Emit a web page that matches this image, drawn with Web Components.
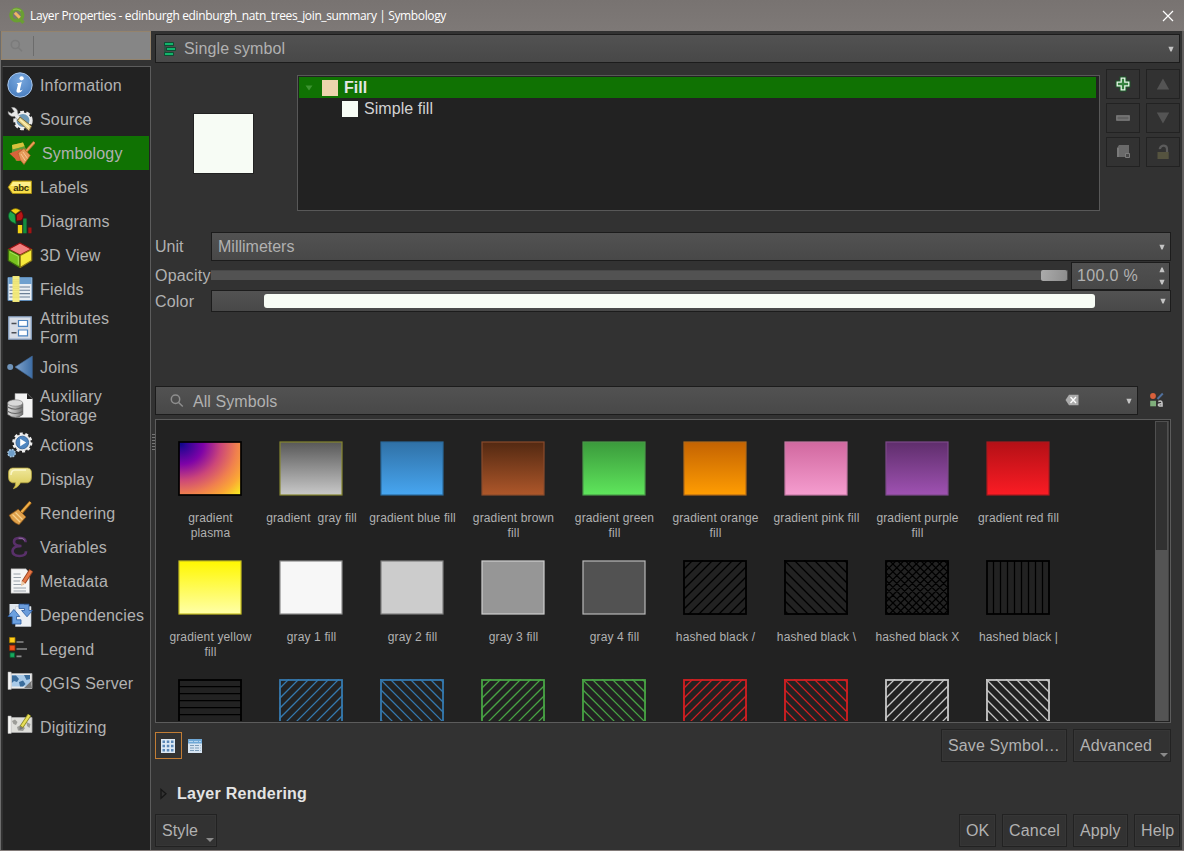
<!DOCTYPE html>
<html lang="en">
<head>
<meta charset="utf-8">
<title>Layer Properties</title>
<style>
html,body{margin:0;padding:0;background:#323232}
body{width:1184px;height:851px;overflow:hidden;font:16px "Liberation Sans",Arial,sans-serif;color:#b1b1b1}
</style>
</head>
<body>
<layer-properties></layer-properties>
<script>
const ICONS = {
info:`<defs><radialGradient id="g" cx=".5" cy=".3" r=".7"><stop offset="0" stop-color="#79a8de"/><stop offset="1" stop-color="#4a7fc0"/></radialGradient></defs><circle cx="13" cy="13" r="12.2" fill="url(#g)" stroke="#a9c6ea" stroke-width="1"/><circle cx="14.6" cy="6.3" r="2.1" fill="#fff"/><path d="M9.6 11.3Q12.5 11 14.8 9.8L13 17.6Q12.7 19.3 15.6 17.6Q14 20.8 11.2 20.8Q9 20.6 9.6 18L11 12.4Z" fill="#fff"/>`,
source:`<circle cx="16" cy="14.5" r="8" fill="#5c86a4" stroke="#e8e8e8" stroke-width="3.4" stroke-dasharray="3.6 2.2"/><circle cx="16" cy="14.5" r="7.3" fill="#6f9ab8" stroke="#eee" stroke-width="1.6"/><path d="M4.5 1.5A5 5 0 0 1 10.5 8L14 11.5L11 14L7.5 10.3A5 5 0 0 1 1 5.5L4.5 7.5L7.3 5.5Z" fill="#e9e9e9" stroke="#888" stroke-width=".5"/><path d="M13 11L24.6 20.2L22 25L10.5 14.5Z" fill="#e8d48a" stroke="#6f6130" stroke-width=".9"/><path d="M13 13.5L22 21.5" stroke="#fff3b8" stroke-width="1.2"/>`,
symbology:`<path d="M3 5L14 2.5L19 14L7 21Z" fill="#8fae2c"/><path d="M3 5L14 2.5L15.5 6L3.5 10Z" fill="#d8c23c"/><path d="M3 9.5L15.5 6.5L17 10L3 14.5Z" fill="#5d9a38"/><path d="M0.5 13.5L12 9L18 20L8.5 21Z" fill="#d9633a"/><path d="M9 13L15 8.5L21.3 15.4L15 24.5Q10.5 20.5 9 13Z" fill="#e59a59" stroke="#b35a24" stroke-width=".7"/><path d="M12 14L16.5 21M14 12L18.5 18.5" stroke="#f6c795" stroke-width="1"/><path d="M17 11.5L25.5 2" stroke="#b9702a" stroke-width="3"/><path d="M17.3 11L25.2 2.2" stroke="#eda35c" stroke-width="1.5"/>`,
labels:`<path d="M5.5 7H24.5V19.5H5.5L1.2 13.2Z" fill="#f7dd48" stroke="#a78d14"/><path d="M6 8H23.5V12H3.6Z" fill="#fff08a"/><text x="6.2" y="16.5" font-family="Liberation Sans,Arial,sans-serif" font-weight="700" font-size="9.5" fill="#33300e" textLength="16">abc</text>`,
diagrams:`<path d="M8.5 6L3.8 2.6Q8.5-1.4 13.5 2.6Z" fill="#f5d313" stroke="#75640b" stroke-width=".7"/><path d="M8 6.5L3.3 3.3Q-.8 8.5 4 13.5L9 16Z" fill="#1fa74c" stroke="#0b5924" stroke-width=".7"/><path d="M9.4 7L14.3 3.3Q18 8.5 14.5 12.2L9.5 13Z" fill="#b61717" stroke="#600" stroke-width=".7"/><path d="M10.8 17H15.2V25.3H10.8Z" fill="#f5d313"/><path d="M16.2 10.5H19.6V25.3H16.2Z" fill="#128c3e"/><path d="M21.3 19.5H24.5V25.3H21.3Z" fill="#a31313"/>`,
view3d:`<path d="M13 1L24.5 7.2L13 13.2L1.5 7.2Z" fill="#f28080" stroke="#961111" stroke-width="1.3" stroke-linejoin="round"/><path d="M1.3 7.5L12.8 13.5V25.5L1.3 18.6Z" fill="#79c21f" stroke="#3e6d0c" stroke-width="1.2" stroke-linejoin="round"/><path d="M24.7 7.5L13.2 13.5V25.5L24.7 18.6Z" fill="#f7e93c" stroke="#8f7a14" stroke-width="1.2" stroke-linejoin="round"/><path d="M3 10L11.3 14.3V22.6" fill="none" stroke="#a9e35b"/>`,
fields:`<path d="M1 1.5H25V24.5H1Z" fill="#e9eef4" stroke="#5e8bb8" stroke-width="1"/><path d="M1.5 2H24.5V8H1.5Z" fill="#6fa0cf"/><path d="M2.5 11H23M2.5 14.3H23M2.5 17.6H23M2.5 21H23" stroke="#6b7f96" stroke-width="1.1"/><path d="M5.5 0H12.5V26H5.5Z" fill="#f9ef7c" fill-opacity=".95"/><path d="M7 3V23M9 3V23M11 3V23" stroke="#d9cf66" stroke-width=".7" stroke-dasharray="1.2 1"/>`,
form:`<path d="M1.8 1.8H24.2V24.2H1.8Z" fill="#d7dde6" stroke="#8fa8c8" stroke-width="1.3"/><path d="M4.5 8.5H9.5M4.5 17.8H9.5" stroke="#4b4f55" stroke-width="1.5"/><path d="M11.5 5.5H20.5V11.3H11.5ZM11.5 15H20.5V20.8H11.5Z" fill="#fff" stroke="#4e86c2" stroke-width="1.2"/>`,
joins:`<defs><linearGradient id="g"><stop offset="0" stop-color="#7fa3cc"/><stop offset="1" stop-color="#3e6ea5"/></linearGradient></defs><circle cx="3.2" cy="13" r="3" fill="#6f93b8"/><path d="M8 13L25.3 2V24.5Z" fill="url(#g)" stroke="#41699a" stroke-width=".6"/>`,
storage:`<path d="M8 .5H20L25.5 6V24.5H8Z" fill="#f3f3f3" stroke="#999" stroke-width=".6"/><path d="M20 .5V6H25.5Z" fill="#222" /><defs><linearGradient id="g"><stop offset="0" stop-color="#e0e0e0"/><stop offset=".6" stop-color="#aaa"/><stop offset="1" stop-color="#6d6d6d"/></linearGradient></defs><path d="M.6 10.5V21.5Q8.2 27.5 15.8 21.5V10.5Z" fill="url(#g)" stroke="#555" stroke-width=".7"/><ellipse cx="8.2" cy="10" rx="7.6" ry="3.2" fill="#d9d9d9" stroke="#777" stroke-width=".6"/><path d="M.6 14Q8.2 18.5 15.8 14M.6 18.2Q8.2 22.8 15.8 18.2" fill="none" stroke="#666" stroke-width="1.2"/>`,
actions:`<circle cx="15.3" cy="10.5" r="8.6" fill="#e6e6e6" stroke="#f0f0f0" stroke-width="3" stroke-dasharray="2.9 2.5"/><circle cx="15.3" cy="10.5" r="6.3" fill="#4f86c0" stroke="#37659c" stroke-width=".9"/><path d="M13.2 6.8L19.2 10.5L13.2 14.2Z" fill="#fff"/><circle cx="4.6" cy="21.2" r="3.6" fill="#6f9fca" stroke="#a9c8e0" stroke-width="1.5" stroke-dasharray="1.7 1.1"/>`,
display:`<defs><linearGradient id="g" x2="0" y2="1"><stop offset="0" stop-color="#f0e89d"/><stop offset="1" stop-color="#d8c850"/></linearGradient></defs><path d="M5.5 2H20.5Q24.5 2.4 24.5 7V11.5Q24.5 16 20.5 16.8H13.5Q11.5 21.5 6.3 22.8Q8.9 20 8.6 16.8H5.5Q1.5 16 1.5 11.5V7Q1.5 2.4 5.5 2Z" fill="url(#g)" stroke="#b9a83e" stroke-width=".7"/><path d="M4 9Q4 4.3 8 4H19" fill="none" stroke="#fbf7cb" stroke-width="1.4"/>`,
rendering:`<path d="M13.5 13.5L23.5 2.2" stroke="#9b5e14" stroke-width="3.4"/><path d="M13.6 13L23.4 2.2" stroke="#efb04a" stroke-width="2"/><path d="M2.2 15.2L11.2 9.2L19 17L12 24.8Q5.5 22.5 2.2 15.2Z" fill="#dfa04a" stroke="#8f5718" stroke-width=".7"/><path d="M5.5 14.5L13 22M8.5 12.5L15.5 19.5" stroke="#f7d08c" stroke-width="1.3"/>`,
variables:`<path d="M18.6 8.3Q18.7 4 12.8 3.8Q6.8 4 7 8Q7.2 11.5 13.6 12Q5.7 12.4 5.5 17Q5.6 21.8 12.6 22Q19.2 21.8 19 17.3" fill="none" stroke="#59306a" stroke-width="2.7"/><path d="M9 12H14.5" stroke="#59306a" stroke-width="2.4"/><path d="M17.8 6.4Q16 3.5 11.6 4.2" stroke="#a184ae" stroke-width=".8" fill="none"/>`,
metadata:`<path d="M4 .8H19L22.5 5V25.2H4Z" fill="#f5f5f5" stroke="#999" stroke-width=".5"/><path d="M6.5 6H13.5M6.5 9.5H14M6.5 13H13M6.5 16.5H17M6.5 20H19M6.5 23H19" stroke="#9aa2aa" stroke-width="1"/><path d="M24.3 2.3L16.5 14.5" stroke="#9b4420" stroke-width="4.6"/><path d="M24 2.7L16.8 14" stroke="#e57847" stroke-width="2.8"/><path d="M14.6 12.8L18.6 15.4L14 18.2Z" fill="#edc8a4"/>`,
dependencies:`<path d="M2.5 2H17V15H2.5Z" fill="#dfe6ee"/><path d="M8.5 4.5H24V24.5H8.5Z" fill="#eceff4" stroke="#c3c9d2" stroke-width=".6"/><path d="M12 2.2H22V8.5H25.4L20 14.8L14.6 8.5H17.5V6.5H12Z" fill="#6b9cdb" stroke="#2c5c9f" stroke-width=".8"/><path d="M14 22H5.2V14.5H1L6.9 7.4L12.8 14.5H9.5V17.8H14Z" fill="#6ba0df" stroke="#2c5c9f" stroke-width=".8"/>`,
legend:`<path d="M2.6 1.5H8V6.7H2.6Z" fill="#ffcf1c" stroke="#a87f00" stroke-width=".8"/><path d="M2.6 9.2H8V14.4H2.6Z" fill="#f2531b" stroke="#962a00" stroke-width=".8"/><path d="M3 16.8H7.6V21.4H3Z" fill="#18a85e" stroke="#075f31" stroke-width=".8"/><path d="M9.5 6H16.5M9.5 13H20M9.5 20.3H14.5" stroke="#8c8c8c" stroke-width="1.7"/>`,
server:`<path d="M1.5 3.5H25V18.5H1.5Z" fill="#e9e9e9" stroke="#aaa" stroke-width=".8"/><path d="M4.8 5H23V16.5H4.8Z" fill="#a9cae8"/><path d="M4.8 5.5H9L12 9L10 12L7 11L4.8 13ZM12 12L16 10.5L18.5 14L16 16.5H13ZM17 5H23V9L19.5 10Z" fill="#3a6c9b"/><path d="M1 2H4.2V19.5H1Z" fill="#f3f3f3" stroke="#aaa" stroke-width=".5"/><path d="M17 18L24.8 10.5Q24 13 25 18Z" fill="#777"/>`,
digitizing:`<path d="M1.5 3.5H25V18.5H1.5Z" fill="#dededa" stroke="#aaa" stroke-width=".8"/><path d="M5 7L8 5.5L10.5 8L9 11L6.5 10ZM10 13L14 11L18 14L16 17L11 16.5ZM19.5 8L23.5 10L22.5 14L20 12Z" fill="#9c9c98"/><path d="M1 2H4.2V19.5H1Z" fill="#f6f6f4" stroke="#aaa" stroke-width=".5"/><path d="M22.5 .8L14.3 13.2" stroke="#8e8a27" stroke-width="4"/><path d="M22.3 1.1L14.8 12.4" stroke="#e8df58" stroke-width="2.4"/><path d="M12.8 12L16.4 14.2L12.5 16Z" fill="#777"/>`
};
const define = (tag, css, html) => customElements.define(tag, class extends HTMLElement{
  connectedCallback(){
    if (this.shadowRoot) return;
    const root = this.attachShadow({mode:'open'});
    root.innerHTML = `<style>*{box-sizing:border-box}:host{display:block;box-sizing:border-box}${css}</style>` + (typeof html === 'function' ? html(this) : html);
  }
});

/* Title bar */
define('title-bar', `:host{display:flex;align-items:center;height:31px;background:linear-gradient(#787371,#7e7977);color:#fff;padding:0 10px 0 9px}
 .t{font:12px/31px "Open Sans","Noto Sans",sans-serif;letter-spacing:-.37px;margin-left:5px;flex:1;white-space:pre}`,
 `<svg width="16" height="17" viewBox="0 0 16 17"><circle cx="7.8" cy="8" r="5.8" fill="none" stroke="#6a9f33" stroke-width="3.6"/><path d="M4 3Q8 .8 12 4" fill="none" stroke="#8fbd4e" stroke-width="1.2"/><path d="M8.5 9.5L14.5 15.8" stroke="#6a9f33" stroke-width="3.4"/><path d="M5.8 5.8L10.8 10.8" stroke="#efb765" stroke-width="3"/></svg>
 <span class="t"><slot></slot></span>
 <svg width="12" height="12" viewBox="0 0 12 12"><path d="M1 1L11 11M11 1L1 11" stroke="#fff" stroke-width="1.2"/></svg>`);

define('side-search', `:host{display:flex;align-items:center;width:150px;height:29px;background:#868686;border:1px solid #94836c;padding-left:7px;margin-left:1px}
 i{width:1px;height:20px;background:#6c6c6c;margin-left:8px}`,
 `<svg width="16" height="16" viewBox="0 0 16 16" fill="none" stroke="#7b7b7b" stroke-width="1.6"><circle cx="6.3" cy="6.5" r="4"/><path d="M9.3 9.5L13 13.2"/></svg><i></i>`);

define('nav-item', `:host{display:flex;align-items:center;height:34px;padding-left:4px;line-height:19px;letter-spacing:.16px}
 :host([tall]){height:44px}:host([last]){height:54px}
 :host([selected]){background:#107203;padding-left:6px;margin-right:1px}
 svg{flex:none;margin-right:7px}`,
 el => `<svg width="26" height="26" viewBox="0 0 26 26">${ICONS[el.getAttribute('icon')]}</svg><span><slot></slot></span>`);

define('nav-list', `:host{width:149px;height:785px;margin:6px 0 0 2px;background:#222;border:1px solid #5c5c5c;border-left-color:#303030;padding-top:1px;white-space:nowrap}`, `<slot></slot>`);

/* Combo box */
define('combo-box', `:host{display:flex;align-items:center;height:28px;background:linear-gradient(#525252,#484848);border:1px solid #1c1c1c;padding:0 5px 0 6px;letter-spacing:.07px}
 .c{flex:1;display:flex;align-items:center;white-space:pre}
 svg{flex:none}`,
 `<div class="c"><slot></slot></div><slot name="end"></slot><svg width="6" height="6" viewBox="0 0 6 6"><path d="M.4 .7H5.6L3.6 5.4H2.4Z" fill="#c4c4c4"/></svg>`);

define('push-button', `:host{display:flex;height:33px;border:1px solid #222;box-shadow:inset 0 0 0 1px #363636;position:relative;padding-left:6px;align-items:center;white-space:nowrap;letter-spacing:.1px}
 svg{position:absolute;right:2px;bottom:4px}`,
 el => `<slot></slot>${el.hasAttribute('menu') ? '<svg width="8" height="4" viewBox="0 0 8 4"><path d="M0 0H8L4 4Z" fill="#8a8a8a"/></svg>' : ''}`);

define('tool-grid', `:host{display:grid;grid-template-columns:34px 34px;grid-auto-rows:30px;gap:4px 6px}
 div{border:1px solid #222;display:flex;align-items:center;justify-content:center}`,
 `<div><svg width="16" height="16" viewBox="0 0 16 16"><path d="M5.8 1.8H10.2V5.8H14.2V10.2H10.2V14.2H5.8V10.2H1.8V5.8H5.8Z" fill="#2f9a45" stroke="#1b5a28" stroke-width="2.4"/><path d="M6.2 2.2H9.8V6.2H13.8V9.8H9.8V13.8H6.2V9.8H2.2V6.2H6.2Z" fill="#35813f" stroke="#e9f6ea" stroke-width="1.3"/></svg></div>
 <div><svg width="14" height="12"><path d="M.8 11.5L7 .5L13.2 11.5Z" fill="#545454"/></svg></div>
 <div><svg width="16" height="8"><path d="M1.8 1.8H14.2V6.2H1.8Z" fill="#626262" stroke="#808080" stroke-width="1.2"/></svg></div>
 <div><svg width="14" height="12"><path d="M.8 .5H13.2L7 11.5Z" fill="#545454"/></svg></div>
 <div><svg width="16" height="16"><path d="M4 1H14V13H6L2 13V4Z" fill="#6a6a6a"/><path d="M2 4H4V13H2Z" fill="#7a7a7a"/><path d="M10.5 9.5H14.5V13.5H10.5Z" fill="#4a4a4a" stroke="#7d7d7d"/></svg></div>
 <div><svg width="16" height="16"><path d="M5 5.2L4.9 4.5Q6 1.5 9 1.7Q12 2 12 5V8" fill="none" stroke="#5b5b5b" stroke-width="2.2"/><path d="M2.5 8H13.7V15H2.5Z" fill="#55533f"/></svg></div>`);

define('symbol-tree', `:host{width:803px;height:136px;background:#222;border:1px solid #585858;padding:1px}
 .r{display:flex;align-items:center;height:21px;width:797px;white-space:pre}
 .s{background:#107203;color:#e6e6e6;font-weight:700}
 b{display:block;width:16px;height:16px}`,
 `<div class="r s"><svg width="8" height="6" style="margin:0 9px 0 6px"><path d="M.5 .5H7.5L4 5.5Z" fill="#3d9431"/></svg><b style="background:#edd4ad"></b><span style="margin-left:6px">Fill</span></div>
 <div class="r" style="color:#d2d2d2;letter-spacing:.05px"><b style="background:#f7fcf5;margin-left:43px"></b><span style="margin-left:6px">Simple fill</span></div>`);

define('opacity-row', `:host{display:flex;width:1016px;height:29px;align-items:center}
 label{width:56px;white-space:nowrap;letter-spacing:.2px}
 .g{width:857px;height:10px;background:#525252;display:flex;justify-content:flex-end;align-items:center;padding-right:1px;border-top:1px solid #484848;margin-top:-1px}
 .g i{width:26px;height:11px;border-radius:2px;background:linear-gradient(100deg,#ababab,#8d8d8d)}
 .s{margin-left:3px;width:99px;height:28px;border:1px solid #1c1c1c;background:linear-gradient(#505050,#484848);display:flex;align-items:center;justify-content:space-between;padding:0 4px 0 5px;letter-spacing:.35px}`,
 `<label>Opacity</label><div class="g"><i></i></div><div class="s"><span>100.0 %</span><svg width="6" height="20" viewBox="0 0 6 20"><path d="M.4 6.3H5.6L3.6 1.5H2.4ZM.4 13.7H5.6L3.6 18.5H2.4Z" fill="#c4c4c4"/></svg></div>`);

/* Swatch with its caption */
const W = 64, H = 55;
function hatch(kind, color){
  let d = '';
  if (kind === '/' ) for (let c = 10; c < W + H; c += 10) d += `M${c} 0L${c - H} ${H}`;
  if (kind === '\\') for (let c = -50; c < W; c += 10) d += `M${c} 0L${c + H} ${H}`;
  if (kind === 'X'){ for (let c = 4; c < W + H; c += 7.8) d += `M${c} 0L${c - H} ${H}`; for (let c = -50.6; c < W; c += 7.8) d += `M${c} 0L${c + H} ${H}`; }
  if (kind === '|') for (let c = 7.5; c < W - 3; c += 7) d += `M${c} 1V${H - 1}`;
  if (kind === '-') for (let c = 7.5; c < H; c += 7) d += `M1 ${c}H${W - 1}`;
  return `<path d="${d}" stroke="${color}" stroke-width="1.25" fill="none"/>`;
}
define('symbol-swatch', `:host{display:flex;flex-direction:column;align-items:center;width:101px;height:119px;font-size:12px;line-height:15px;text-align:center;letter-spacing:.14px}
 span{display:block;width:92px;margin-top:15px;white-space:pre}svg{flex:none;align-self:flex-start;margin-left:18px}`,
 el => {
  const a = n => el.getAttribute(n), st = a('edge');
  let inner;
  if (a('hatch')) inner = `${hatch(a('hatch'), st)}<rect x="1" y="1" width="62" height="53" fill="none" stroke="${st}" stroke-width="1.8"/>`;
  else {
    const [p, q] = a('fill').split(',');
    const def = p === 'plasma'
      ? `<radialGradient id="f" gradientUnits="userSpaceOnUse" cx="0" cy="0" r="80" gradientTransform="translate(3 3) scale(1 .9)"><stop offset="0" stop-color="#0d0887"/><stop offset=".06" stop-color="#2a0593"/><stop offset=".28" stop-color="#7e03a8"/><stop offset=".5" stop-color="#cc4778"/><stop offset=".7" stop-color="#f0804e"/><stop offset=".85" stop-color="#fba835"/><stop offset="1" stop-color="#f8e821"/></radialGradient>`
      : `<linearGradient id="f" x2="0" y2="1"><stop stop-color="${p}"/><stop offset="1" stop-color="${q || p}"/></linearGradient>`;
    inner = `<defs>${def}</defs><rect x="1" y="1" width="62" height="53" fill="url(#f)" stroke="${st}" stroke-width="${a('sw') || 1.2}"/>`;
  }
  return `<svg width="${W}" height="${H}" viewBox="0 0 ${W} ${H}">${inner}</svg><span><slot></slot></span>`;
 });

define('symbol-list', `:host{display:flex;width:1016px;height:304px;background:#222;border:1px solid #5c5c5c;overflow:hidden}
 .g{display:grid;grid-template-columns:repeat(9,101px);padding:21px 0 0 4px;height:301px;width:999px;overflow:hidden;align-content:start}
 .b{width:14px;height:300px;margin-top:1px;background:#545454;border-right:1px solid #444}
 .b i{display:block;height:129px;background:#313131;border:1px solid #505050;border-bottom:0}`,
 `<div class="g"><slot></slot></div><div class="b"><i></i></div>`);

define('layer-properties', `:host{width:1184px;height:851px;background:#323232;overflow:hidden;border-bottom:1px solid #827b79;}
 .body{display:flex;height:819px;border-left:1px solid #6d6d6d;border-right:2px solid #605e5d}
 .body>aside{width:150px;margin-left:-1px}
 main{flex:1;padding:3px 0 0 5px;position:relative;display:flex;flex-direction:column;align-items:flex-start}
 .grip{position:absolute;left:2px;top:403px;width:3px;height:17px;background:repeating-linear-gradient(#777 0 1px,transparent 1px 3px)}
 .top{display:flex;margin-top:6px;height:160px}
 .prev{width:61px;height:61px;background:#f7fcf5;border:1px solid #222;margin:44px 43px 0 38px}
 .row{display:flex;align-items:center}
 .row label{width:56px;letter-spacing:.2px}
 .gap{flex:1}
 .bar{height:14px;width:831px;border-radius:3px;background:#f7fcf5;margin:0 0 0 46px}
 .tb{width:27px;height:27px;display:flex;align-items:center;border:1px solid transparent;padding-left:5px}`,
 () => `<title-bar>Layer Properties - edinburgh edinburgh_natn_trees_join_summary | Symbology</title-bar>
 <div class="body">
  <aside><side-search></side-search>
   <nav-list>
    <nav-item icon="info">Information</nav-item><nav-item icon="source">Source</nav-item><nav-item icon="symbology" selected>Symbology</nav-item>
    <nav-item icon="labels">Labels</nav-item><nav-item icon="diagrams">Diagrams</nav-item><nav-item icon="view3d">3D View</nav-item><nav-item icon="fields">Fields</nav-item>
    <nav-item icon="form" tall>Attributes<br>Form</nav-item><nav-item icon="joins">Joins</nav-item><nav-item icon="storage" tall>Auxiliary<br>Storage</nav-item>
    <nav-item icon="actions">Actions</nav-item><nav-item icon="display">Display</nav-item><nav-item icon="rendering">Rendering</nav-item><nav-item icon="variables">Variables</nav-item>
    <nav-item icon="metadata">Metadata</nav-item><nav-item icon="dependencies">Dependencies</nav-item><nav-item icon="legend">Legend</nav-item><nav-item icon="server">QGIS Server</nav-item>
    <nav-item icon="digitizing" last>Digitizing</nav-item>
   </nav-list></aside>
  <main><div class="grip"></div>
   <combo-box style="width:1025px;height:29px"><svg width="14" height="16" viewBox="0 0 14 16" style="margin:0 7px 0 1px"><g fill="#12b56c" stroke="#0a3f28" stroke-width=".8"><path d="M1.5 1.5H10.5V4.5H1.5ZM3.5 6.5H12.5V9.5H3.5ZM1.5 11.5H10.5V14.5H1.5Z"/></g><path d="M2 4.5V11.5" stroke="#0a5a38" stroke-width="1"/></svg><span style="letter-spacing:.12px">Single symbol</span></combo-box>
   <div class="top"><div class="prev"></div><symbol-tree style="margin-top:6px"></symbol-tree><tool-grid style="margin-left:6px"></tool-grid></div>
   <div class="row" style="margin-top:3px"><label style="letter-spacing:0">Unit</label><combo-box style="width:960px;height:29px;letter-spacing:0">Millimeters</combo-box></div>
   <opacity-row></opacity-row>
   <div class="row" style="height:22px"><label style="padding-top:2px">Color</label><combo-box style="width:960px;height:22px;padding-right:4px"><div class="bar"></div></combo-box></div>
   <div class="row" style="margin-top:74px"><combo-box style="width:983px;height:29px"><svg width="16" height="16" viewBox="0 0 16 16" style="margin:0 8px 0 7px" fill="none" stroke="#8e8e8e" stroke-width="1.5"><circle cx="6.5" cy="6.3" r="4.2"/><path d="M9.6 9.5L13.8 13.5"/></svg><span style="letter-spacing:.07px;padding-top:2px">All Symbols</span>
     <svg slot="end" width="14" height="12" viewBox="0 0 14 12" style="margin-right:47px;margin-top:-2px"><path d="M4 .8H13.5V11.2H4L.5 6Z" fill="#ababab"/><path d="M5.5 3L11 9M11 3L5.5 9" stroke="#fff" stroke-width="1.3"/></svg></combo-box>
    <svg width="16" height="16" viewBox="0 0 16 16" style="margin-left:11px;margin-top:-2px"><circle cx="4" cy="4" r="2.9" fill="#d9603b"/><path d="M8.5 7L13.8 1.5" stroke="#51719e" stroke-width="1.9"/><path d="M1.2 8.8H7V14.3H1.2Z" fill="#7fae7b"/><path d="M9.3 9.4Q13 8.2 13 11V14H10.5Q8.8 13.6 9.8 12.1L13 11.5" fill="none" stroke="#c3c3c3" stroke-width="1.6"/></svg></div>
   <symbol-list style="margin-top:4px">
    <symbol-swatch fill="plasma" edge="#000" sw="1.7">gradient<br>plasma</symbol-swatch>
    <symbol-swatch fill="#585858,#c9c9c9" edge="#85862f">gradient  gray fill</symbol-swatch>
    <symbol-swatch fill="#3071a6,#47a6f1" edge="#2a699b">gradient blue fill</symbol-swatch>
    <symbol-swatch fill="#532912,#ae572a" edge="#8a4b2c">gradient brown<br>fill</symbol-swatch>
    <symbol-swatch fill="#3b9a3c,#5fe65c" edge="#4a9948">gradient green<br>fill</symbol-swatch>
    <symbol-swatch fill="#c46302,#ff9d02" edge="#b16a19">gradient orange<br>fill</symbol-swatch>
    <symbol-swatch fill="#d1689f,#f59dcf" edge="#c479a3">gradient pink fill</symbol-swatch>
    <symbol-swatch fill="#5f2e6c,#9f52b2" edge="#7d4a8b">gradient purple<br>fill</symbol-swatch>
    <symbol-swatch fill="#b41016,#fb1c24" edge="#a81a1e">gradient red fill</symbol-swatch>
    <symbol-swatch fill="#fff700,#ffffa8" edge="#c6be22">gradient yellow<br>fill</symbol-swatch>
    <symbol-swatch fill="#f7f7f7" edge="#8a8a8a">gray 1 fill</symbol-swatch>
    <symbol-swatch fill="#cccccc" edge="#7e7e7e">gray 2 fill</symbol-swatch>
    <symbol-swatch fill="#969696" edge="#cfcfcf">gray 3 fill</symbol-swatch>
    <symbol-swatch fill="#525252" edge="#b9b9b9">gray 4 fill</symbol-swatch>
    <symbol-swatch hatch="/" edge="#000">hashed black /</symbol-swatch>
    <symbol-swatch hatch="\\" edge="#000">hashed black \\</symbol-swatch>
    <symbol-swatch hatch="X" edge="#000">hashed black X</symbol-swatch>
    <symbol-swatch hatch="|" edge="#000">hashed black |</symbol-swatch>
    <symbol-swatch hatch="-" edge="#000"></symbol-swatch>
    <symbol-swatch hatch="/" edge="#3579ae"></symbol-swatch>
    <symbol-swatch hatch="\\" edge="#3579ae"></symbol-swatch>
    <symbol-swatch hatch="/" edge="#48a344"></symbol-swatch>
    <symbol-swatch hatch="\\" edge="#48a344"></symbol-swatch>
    <symbol-swatch hatch="/" edge="#d21f22"></symbol-swatch>
    <symbol-swatch hatch="\\" edge="#d21f22"></symbol-swatch>
    <symbol-swatch hatch="/" edge="#c6c6c6"></symbol-swatch>
    <symbol-swatch hatch="\\" edge="#c6c6c6"></symbol-swatch>
   </symbol-list>
   <div class="row" style="margin-top:6px;width:1016px;height:33px">
    <div class="tb" style="border-color:#c27d35"><svg width="14" height="14" viewBox="0 0 14 14"><path d="M0 0H14V14H0Z" fill="#dbe8f5"/><path d="M1.5 1.5H4V4H1.5ZM5.8 1.5H8.3V4H5.8ZM10 1.5H12.5V4H10ZM1.5 5.8H4V8.3H1.5ZM5.8 5.8H8.3V8.3H5.8ZM10 5.8H12.5V8.3H10ZM1.5 10H4V12.5H1.5ZM5.8 10H8.3V12.5H5.8ZM10 10H12.5V12.5H10Z" fill="#5b87b6"/></svg></div>
    <div class="tb"><svg width="14" height="14" viewBox="0 0 14 14"><path d="M0 0H14V14H0Z" fill="#d7e5f2"/><path d="M0 0H14V4.5H0Z" fill="#6fa8d6"/><path d="M2 6.5H12.5M2 9H12.5M2 11.5H12.5" stroke="#7d9db9" stroke-dasharray="4 1"/><path d="M1 2.5H13" stroke="#b5d5ef" stroke-dasharray="4 1"/></svg></div>
    <div class="gap"></div><push-button style="width:126px;margin-right:6px;letter-spacing:.13px">Save Symbol…</push-button><push-button menu style="width:98px">Advanced</push-button></div>
   <div class="row" style="margin-top:22px;height:20px"><svg width="8" height="12" viewBox="0 0 8 12" style="margin:0 9px 0 5px"><path d="M1 1.5L6 5.8L1 10.2Z" fill="none" stroke="#171717" stroke-width="1.3"/></svg><b style="color:#e4e4e4;letter-spacing:.26px">Layer Rendering</b></div>
   <div class="row" style="margin-top:10px;width:1025px"><push-button menu style="width:62px">Style</push-button><div class="gap"></div>
    <push-button style="width:37px;margin-right:6px">OK</push-button><push-button style="width:65px;margin-right:6px;letter-spacing:.2px">Cancel</push-button><push-button style="width:55px;margin-right:6px">Apply</push-button><push-button style="width:46px">Help</push-button></div>
  </main>
 </div>`);
</script>
</body>
</html>
